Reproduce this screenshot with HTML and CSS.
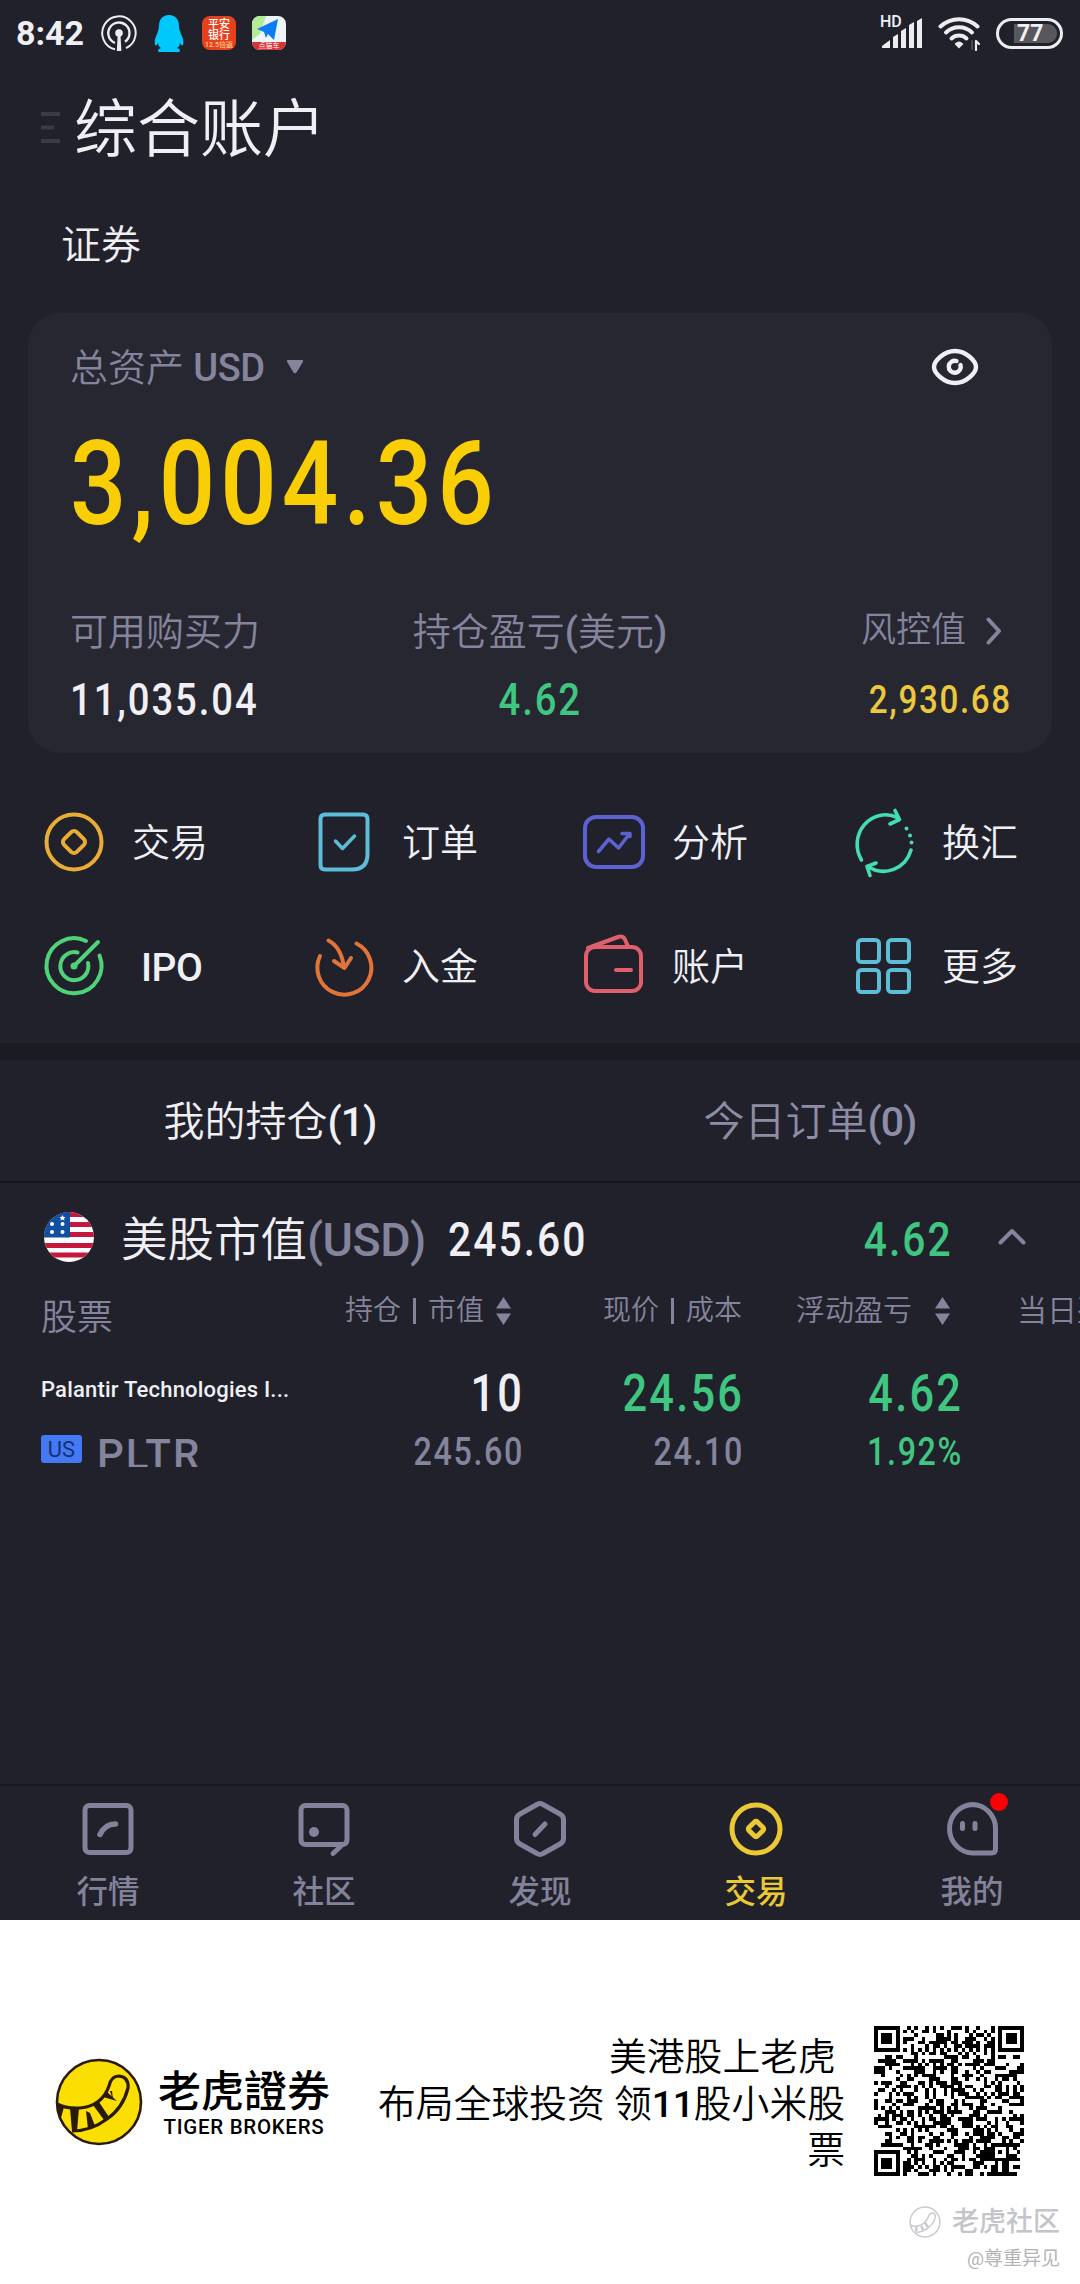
FILE: index.html
```
<!DOCTYPE html>
<html lang="zh-CN">
<head>
<meta charset="utf-8">
<title>综合账户</title>
<link rel="stylesheet" href="styles.css">
</head>
<body>
<div class="app">

  <div class="status">
    <span class="clock">8:42</span>
    <svg class="st-pod" width="36" height="38" viewBox="0 0 36 38" fill="none" stroke="#ededf0">
      <path d="M14 35.3A16.7 16.7 0 1 1 25 34.2" stroke-width="2"/>
      <path d="M14 29A10.6 10.6 0 1 1 24 27.8" stroke-width="2.4"/>
      <circle cx="18" cy="19" r="3.8" fill="#ededf0" stroke="none"/>
      <path d="M16.8 19h2.6l1 18h-4.6z" fill="#ededf0" stroke="none"/>
    </svg>
    <svg class="st-qq" width="30" height="38" viewBox="0 0 30 38" fill="#00c8fb">
      <path d="M15 1C8 1 5 6 5 12c0 3-1 5-2 8-2 4-3 8-2 11 1 1 2 0 3-2 0 2 1 4 3 5-3 1-4 3-2 4h20c2-1 1-3-2-4 2-1 3-3 3-5 1 2 2 3 3 2 1-3 0-7-2-11-1-3-2-5-2-8C25 6 22 1 15 1z"/>
    </svg>
    <div class="st-bank">平安<br>银行<small>12.5倍返</small></div>
    <div class="st-map">
      <svg width="34" height="34" viewBox="0 0 34 34">
        <path d="M0 0h34v34H0z" fill="#eef5f8"/>
        <path d="M0 0h14L8 18 0 24z" fill="#b4ec96"/>
        <path d="M5 13L26 3l-4 21-6-6-2 4-2-6z" fill="#0d7cf2"/>
        <path d="M0 26h34v8H0z" fill="#d83232"/>
      </svg>
      <small>点猫车</small>
    </div>
    <span class="grow"></span>
    <div class="st-signal">
      <svg width="42" height="32" viewBox="0 0 42 32" fill="#ededf0">
        <path d="M1 31v-2l8-6v8z"/><path d="M12 31V20l5-3v14z"/><path d="M20 31V14l5-3v20z"/><path d="M28 31V8l5-3v26z"/><path d="M36 31V4l5-3v30z"/>
      </svg>
      <b>HD</b>
    </div>
    <svg class="st-wifi" width="43" height="36" viewBox="0 0 43 36" fill="none" stroke="#ededf0" stroke-width="4" stroke-linecap="round">
      <path d="M2.500 11.500a27 27 0 0 1 37 0"/>
      <path d="M8 17.500a19 19 0 0 1 26 0"/>
      <path d="M13.500 23.500a11 11 0 0 1 15 0"/>
      <path d="M18 29q3-3 6 0l-3 3z" stroke-width="2" fill="#ededf0"/>
      <path d="M38 26v9M38 26l3 3" stroke-width="2.200"/>
      <path d="M34 26v8" stroke="#4a4a55" stroke-width="2"/>
    </svg>
    <div class="battery"><span>77</span></div>
  </div>

  <div class="title">
    <svg width="20" height="34" viewBox="0 0 20 34" fill="#3b3b47"><path d="M0 1h19v4H0zM0 14.500h13v4H0zM0 28h19v4H0z"/></svg>
    <h1>综合账户</h1>
  </div>
  <div class="subtitle">证券</div>

  <div class="card">
    <div class="card-head">
      <span class="ch-label">总资产 <i>USD</i></span>
      <svg class="caret" width="16" height="14" viewBox="0 0 16 14" fill="#84849c"><path d="M1 0h14q2 0 .5 2.500L9.500 12.500q-1.500 1.500-3 0L.5 2.500Q-1 0 1 0z"/></svg>
      <span class="grow"></span>
      <svg class="eye" width="48" height="38" viewBox="0 0 48 38" fill="none" stroke="#f0f0f4" stroke-width="4.400" stroke-linecap="round">
        <path d="M24 3C35 3 45 13 45 19s-10 16-21 16S3 25 3 19 13 3 24 3z"/>
        <path d="M25.500 13a6 6 0 1 0 4 4"/>
      </svg>
    </div>
    <div class="total num">3,004.36</div>
    <div class="metrics">
      <div class="metric">
        <div class="m-label">可用购买力</div>
        <div class="m-value num">11,035.04</div>
      </div>
      <div class="metric mid">
        <div class="m-label">持仓盈亏<i>(</i>美元<i>)</i></div>
        <div class="m-value num up">4.62</div>
      </div>
      <div class="metric end">
        <div class="m-label small">风控值
          <svg width="16" height="28" viewBox="0 0 16 28" fill="none" stroke="#84849c" stroke-width="4" stroke-linecap="round" stroke-linejoin="round"><path d="M2.500 2.500L13 14 2.500 25.500"/></svg>
        </div>
        <div class="m-value small num gold">2,930.68</div>
      </div>
    </div>
  </div>

  <div class="quick">
    <div class="q-item">
      <svg width="68" height="68" viewBox="0 0 68 68" fill="none" stroke="#e9ad36" stroke-width="4" stroke-linejoin="round">
        <circle cx="34" cy="34" r="27.500"/>
        <rect x="25" y="25" width="18" height="18" rx="4" transform="rotate(45 34 34)"/>
      </svg>
      <span>交易</span>
    </div>
    <div class="q-item">
      <svg width="68" height="68" viewBox="0 0 68 68" fill="none" stroke="#5dbcd6" stroke-width="4" stroke-linecap="round" stroke-linejoin="round">
        <path d="M15 6.500h38q4.500 0 4.500 4.500v35q0 15.500-15.500 15.500H15q-4.500 0-4.500-4.500V11q0-4.500 4.500-4.500z"/>
        <path d="M25.500 33l7 7.500L44.500 28" stroke-width="3.500"/>
      </svg>
      <span>订单</span>
    </div>
    <div class="q-item">
      <svg width="68" height="68" viewBox="0 0 68 68" fill="none" stroke="#5c62d2" stroke-width="4" stroke-linecap="round" stroke-linejoin="round">
        <rect x="5" y="9" width="58" height="50" rx="11"/>
        <path d="M18.500 43.500L29 31l9.500 9L49 26.500M42 25.500h8v3" stroke-width="3.500"/>
      </svg>
      <span>分析</span>
    </div>
    <div class="q-item">
      <svg width="68" height="72" viewBox="0 0 68 72" fill="none" stroke="#45dcb0" stroke-width="3.600" stroke-linecap="round" stroke-linejoin="round">
        <path d="M11.500 54A28.500 29.500 0 0 1 47.500 11.500"/>
        <path d="M45 4.500l4.500 9-9.500 4.500"/>
        <path d="M61 44A28.500 29 0 0 1 18 60.500"/>
        <path d="M26 57l-9 3.500 3 9"/>
        <path d="M56.500 22.500v.1M60 29.500v.1M61.500 36.500v.1" stroke-width="4"/>
      </svg>
      <span>换汇</span>
    </div>
    <div class="q-item">
      <svg width="68" height="68" viewBox="0 0 68 68" fill="none" stroke="#50d278" stroke-width="4" stroke-linecap="round">
        <path d="M46 9a27.500 27.500 0 1 0 13.500 14.500"/>
        <path d="M37.500 20.500a14 14 0 1 0 10.500 10.500"/>
        <path d="M34 34L58 10"/>
        <circle cx="34" cy="34" r="2.500" fill="#50d278" stroke-width="2"/>
      </svg>
      <span class="ipo">IPO</span>
    </div>
    <div class="q-item">
      <svg width="68" height="68" viewBox="0 0 68 68" fill="none" stroke="#e2743a" stroke-width="4" stroke-linecap="round" stroke-linejoin="round">
        <path d="M46.500 11.500A27 27 0 1 1 10 24"/>
        <path d="M18.500 8.500Q31 15 34 35"/>
        <path d="M24 29l10.500 7L41 26"/>
      </svg>
      <span>入金</span>
    </div>
    <div class="q-item">
      <svg width="68" height="68" viewBox="0 0 68 68" fill="none" stroke="#e05f6c" stroke-width="4" stroke-linecap="round" stroke-linejoin="round">
        <rect x="6" y="15" width="55" height="44" rx="9"/>
        <path d="M8 16L38 5q5-1.500 7 2.500l3 7M36 38h15"/>
      </svg>
      <span>账户</span>
    </div>
    <div class="q-item">
      <svg width="68" height="68" viewBox="0 0 68 68" fill="none" stroke="#5dbcd6" stroke-width="4">
        <rect x="8" y="8" width="21" height="22" rx="3.500"/>
        <rect x="38" y="8" width="21" height="22" rx="3.500"/>
        <rect x="8" y="38" width="21" height="22" rx="3.500"/>
        <rect x="38" y="38" width="21" height="22" rx="3.500"/>
      </svg>
      <span>更多</span>
    </div>
  </div>

  <div class="tabs">
    <div class="tab active">我的持仓<i>(1)</i></div>
    <div class="tab">今日订单<i>(0)</i></div>
  </div>

  <div class="market">
    <svg class="flag" width="50" height="50" viewBox="0 0 50 50">
      <clipPath id="round"><circle cx="25" cy="25" r="25"/></clipPath>
      <g clip-path="url(#round)">
        <path d="M0 0h50v50H0z" fill="#fff"/>
        <path d="M0 0h50v5H0zM0 10h50v5H0zM0 20h50v5H0zM0 31h50v5H0zM0 40.500h50v5H0z" fill="#c4183c"/>
        <path d="M0 0h26v25.500H0z" fill="#1150a0"/>
        <path d="M18.500 3l1 2h2l-1.500 1.500.5 2-2-1-2 1 .5-2L15.500 5h2z" fill="#fff"/>
        <g fill="#fff"><circle cx="8" cy="12" r="2"/><circle cx="18.500" cy="12" r="2"/><circle cx="8" cy="20" r="2"/><circle cx="18.500" cy="20" r="2"/></g>
      </g>
    </svg>
    <span class="mk-name">美股市值<i>(USD)</i></span>
    <span class="mk-value num">245.60</span>
    <span class="grow"></span>
    <span class="mk-value num right up">4.62</span>
    <svg class="fold" width="28" height="18" viewBox="0 0 28 18" fill="none" stroke="#84849c" stroke-width="4" stroke-linecap="round" stroke-linejoin="round"><path d="M2.500 14.500L14 3l11.500 11.500"/></svg>
  </div>

  <div class="row head">
    <div class="c-stock">股票</div>
    <div class="c-num sort">持仓<b></b>市值
      <svg width="15" height="28" viewBox="0 0 15 28" fill="#84849c"><path d="M7.500 0L15 11.500H0zM7.500 28L0 16.500h15z"/></svg>
    </div>
    <div class="c-num">现价<b></b>成本</div>
    <div class="c-num sort wide">浮动盈亏
      <svg width="15" height="28" viewBox="0 0 15 28" fill="#84849c"><path d="M7.500 0L15 11.500H0zM7.500 28L0 16.500h15z"/></svg>
    </div>
    <div class="c-next">当日盈亏</div>
  </div>

  <div class="row main">
    <div class="c-full">Palantir Technologies I...</div>
    <div class="c-num num">10</div>
    <div class="c-num num up">24.56</div>
    <div class="c-num num up">4.62</div>
  </div>
  <div class="row sub">
    <div class="c-code"><span class="badge">US</span><span class="ticker">PLTR</span></div>
    <div class="c-num num">245.60</div>
    <div class="c-num num">24.10</div>
    <div class="c-num num up">1.92%</div>
  </div>

  <span class="grow"></span>

  <div class="navbar">
    <div class="nav">
      <svg width="56" height="58" viewBox="0 0 56 58" fill="none" stroke="#82829a" stroke-width="5" stroke-linecap="round">
        <rect x="5" y="5.500" width="46" height="47" rx="4.500"/>
        <path d="M20 34.500Q25 24 35.500 24" stroke-width="5.500"/>
      </svg>
      <span>行情</span>
    </div>
    <div class="nav">
      <svg width="56" height="58" viewBox="0 0 56 58" fill="none" stroke="#82829a" stroke-width="5" stroke-linecap="round">
        <rect x="5" y="5.500" width="46" height="39" rx="4.500"/>
        <circle cx="18" cy="32" r="5" fill="#82829a" stroke="none"/>
        <path d="M45 46l-8 7.500"/>
      </svg>
      <span>社区</span>
    </div>
    <div class="nav">
      <svg width="56" height="58" viewBox="0 0 56 58" fill="none" stroke="#82829a" stroke-width="5" stroke-linecap="round" stroke-linejoin="round">
        <path d="M25 4.500q3-2 6 0L48 14q3.500 2 3.500 5.500v19q0 3.500-3.500 5.500l-17 9.500q-3 2-6 0L8 44q-3.500-2-3.500-5.500v-19Q4.500 16 8 14z"/>
        <path d="M23 34.500L33 24"/>
      </svg>
      <span>发现</span>
    </div>
    <div class="nav active">
      <svg width="56" height="58" viewBox="0 0 56 58" fill="none" stroke="#eac935" stroke-width="5" stroke-linejoin="round">
        <circle cx="28" cy="29" r="24"/>
        <rect x="22" y="23" width="12" height="12" rx="2" transform="rotate(45 28 29)"/>
      </svg>
      <span>交易</span>
    </div>
    <div class="nav">
      <svg width="56" height="58" viewBox="0 0 56 58" fill="none" stroke="#82829a" stroke-width="5" stroke-linecap="round">
        <path d="M28 4.500A23.500 24 0 0 1 51.500 29v20q0 4-4 4H28A24 24.300 0 0 1 28 4.500z"/>
        <path d="M18.500 23.500v5M31 23.500v5"/>
      </svg>
      <span>我的</span>
      <em class="dot"></em>
    </div>
  </div>

  <div class="promo">
    <svg class="logo" width="88" height="88" viewBox="0 0 88 88">
      <circle cx="44" cy="44" r="42" fill="#fcdf02" stroke="#2a1a08" stroke-width="2.600"/>
      <path d="M2 46Q12 51 25 50Q47 48 54 28Q56 18 64 18Q74 19 73 30Q68 50 52 61Q36 73 17 73" fill="none" stroke="#2a1a08" stroke-width="3.200"/>
      <g fill="#2a1a08">
        <path d="M2 46l7 3-3 11q-4-6-4-14z"/>
        <path d="M15 50h9l-2 23-5 0z"/>
        <path d="M31 53l4 2 5 13-7 3z"/>
        <path d="M38 47l6-3 10 15-5 3z"/>
        <path d="M48 39l4-5 10 9z"/>
        <path d="M55 33l2 0 1 9z"/>
      </g>
    </svg>
    <div class="brand">
      <strong>老虎證券</strong>
      <span>TIGER BROKERS</span>
    </div>
    <div class="slogan"><span>美港股上老虎&nbsp;</span><br>布局全球投资 领<i>11</i>股小米股<br>票</div>
    <svg class="qr" id="qr" width="150" height="150" viewBox="0 0 41 41" shape-rendering="crispEdges"></svg>
  </div>

  <div class="mark">
    <div class="mark-name">
      <svg width="32" height="32" viewBox="0 0 88 88" fill="none" stroke="#c9c9cf" stroke-width="4">
        <circle cx="44" cy="44" r="41"/>
        <path d="M4 52q8 6 20 3Q46 50 54 28q3-9 11-9 9 1 7 13-5 18-20 29-16 11-32 12"/>
        <path d="M20 56v14M34 54l4 12M44 46l8 12" stroke-width="7"/>
      </svg>
      <span>老虎社区</span>
    </div>
    <div class="mark-user">@尊重异见</div>
  </div>

</div>
<script src="qr.js"></script>
</body>
</html>
```
FILE: styles.css
```
*
{
  box-sizing:border-box;
}

body
{
  margin:0;
  background:#21212b;
  color:#efeff4;
  font-family:Roboto, "Noto Sans CJK SC", sans-serif;
  font-weight:350;
}

i, em
{
  font-style:normal;
  font-weight:500;
}

svg
{
  display:block;
  flex:none;
}

.app
{
  width:1080px;
  height:2284px;
  display:flex;
  flex-direction:column;
  overflow:hidden;
}

.app > div
{
  flex:none;
}

.app .grow
{
  flex:1;
}

/* narrow figures, set a little apart */
.num
{
  font-weight:500;
  letter-spacing:0.05em;
  transform:scaleX(0.85);
  transform-origin:left center;
}

.up
{
  color:#3fc680;
}

.gold
{
  color:#ebc83c;
}

/* status bar */
.status
{
  height:66px;
  display:flex;
  align-items:center;
  padding:0 17px 0 16px;
}

.clock
{
  width:85px;
  font-size:34px;
  font-weight:700;
}

.st-qq
{
  margin-left:17px;
}

.st-bank, .st-map
{
  position:relative;
  width:34px;
  height:34px;
  margin-left:18px;
  border-radius:8px;
  overflow:hidden;
}

.st-bank
{
  background:#e8401c;
  color:#fff;
  font-size:11px;
  font-weight:500;
  line-height:11px;
  text-align:center;
  padding-top:3px;
}

.st-bank small
{
  display:block;
  font-size:7px;
  line-height:8px;
  color:#ffd08a;
}

.st-map
{
  margin-left:16px;
}

.st-map small
{
  position:absolute;
  left:0;
  right:0;
  bottom:0;
  font-size:7px;
  line-height:8px;
  text-align:center;
  color:#fff;
}

.st-signal
{
  position:relative;
  margin-right:15px;
}

.st-signal b
{
  position:absolute;
  left:-1px;
  top:-3px;
  font-size:16px;
  line-height:16px;
  font-weight:500;
}

.st-wifi
{
  margin-right:15px;
}

.battery
{
  width:67px;
  height:31px;
  border:3px solid #ededf0;
  border-radius:16px;
  padding:3px;
}

.battery span
{
  display:block;
  margin-left:12px;
  height:19px;
  padding-left:3px;
  border-radius:0 9px 9px 0;
  background:#57575c;
  font-size:23px;
  font-weight:700;
  line-height:19px;
}

/* page title */
.title
{
  height:124px;
  display:flex;
  align-items:center;
  padding-left:41px;
}

.title h1
{
  margin:3px 0 0 13px;
  font-size:63px;
  line-height:80px;
  font-weight:350;
}

.subtitle
{
  height:107px;
  padding:2px 0 0 61px;
  font-size:40px;
  line-height:107px;
}

/* assets card */
.card
{
  height:440px;
  margin:16px 28px 0;
  padding:0 42px 0 42px;
  border-radius:32px;
  background:#272732;
}

.card-head
{
  height:108px;
  display:flex;
  align-items:center;
  padding-right:31px;
  font-size:38px;
  color:#84849c;
}

.ch-label
{
  margin-bottom:6px;
}

.card-head i
{
  letter-spacing:-0.5px;
}

.caret
{
  margin-left:23px;
}

.total
{
  height:123px;
  padding-top:2px;
  font-size:117px;
  line-height:123px;
  color:#f9ce04;
}

.metrics
{
  display:grid;
  grid-template-columns:1fr auto 1fr;
  margin-top:61px;
}

.m-label
{
  height:50px;
  padding-top:2px;
  font-size:38px;
  line-height:50px;
  color:#84849c;
}

.m-value
{
  height:50px;
  margin-top:20px;
  font-size:45px;
  line-height:50px;
}

.mid
{
  text-align:center;
}

.mid .num
{
  transform-origin:center;
}

.end
{
  text-align:right;
}

.end .num
{
  margin-right:-2px;
  transform-origin:right center;
}

.m-label.small
{
  display:flex;
  justify-content:flex-end;
  align-items:center;
  gap:20px;
  padding-right:8px;
  font-size:35px;
}

.m-value.small
{
  font-size:39px;
}

/* shortcuts */
.quick
{
  height:290px;
  padding-top:27px;
  display:grid;
  grid-template-columns:repeat(4, 270px);
  grid-auto-rows:124px;
}

.q-item
{
  display:flex;
  align-items:center;
  padding-left:40px;
}

.q-item span
{
  margin:0 0 5px 24px;
  font-size:38px;
}

.q-item .ipo
{
  margin:3px 0 0 33px;
  font-size:39px;
  font-weight:500;
  letter-spacing:-0.5px;
}

/* tabs */
.tabs
{
  height:140px;
  display:flex;
  border-top:17px solid #1b1b24;
  border-bottom:2px solid #15151d;
}

.tab
{
  flex:1;
  padding-top:2px;
  text-align:center;
  font-size:41px;
  line-height:121px;
  color:#8d8da6;
}

.tab i
{
  letter-spacing:-1px;
}

.tab.active
{
  color:#efeff4;
}

/* positions */
.market
{
  height:108px;
  display:flex;
  align-items:center;
  padding:0 54px 0 44px;
}

.mk-name
{
  margin:0 0 3px 27px;
  font-size:46.500px;
}

.mk-name i
{
  color:#84849c;
  letter-spacing:-0.5px;
}

.mk-value
{
  margin:4px 0 0 22px;
  font-size:48px;
}

.mk-value.right
{
  transform-origin:right center;
}

.fold
{
  margin-left:45px;
}

.row
{
  display:grid;
  grid-template-columns:262px 219px 220px 219px 119px;
  align-items:center;
  padding-left:41px;
}

.row .num
{
  margin-right:-2px;
  transform-origin:right center;
}

.head
{
  height:38px;
  font-size:28px;
  line-height:38px;
  color:#84849c;
  margin-top:-6px;
}

.c-stock
{
  padding-top:14px;
  font-size:36px;
}

.c-num
{
  text-align:right;
}

.head .c-num
{
  display:flex;
  justify-content:flex-end;
  align-items:center;
}

.head .c-num b
{
  width:3px;
  height:26px;
  margin:0 12px;
  background:#84849c;
}

.sort
{
  padding-right:11px;
}

.sort svg
{
  margin-left:12px;
}

.sort.wide
{
  font-size:29px;
}

.sort.wide svg
{
  margin-left:23px;
}

.c-next
{
  padding-left:56px;
  font-size:30px;
  white-space:nowrap;
  overflow:hidden;
}

.main
{
  height:60px;
  margin-top:41px;
  font-size:51px;
  line-height:60px;
}

.c-full
{
  margin-top:-9px;
  font-size:22px;
  font-weight:500;
  letter-spacing:0.2px;
  white-space:nowrap;
}

.sub
{
  height:56px;
  font-size:38px;
  line-height:56px;
  color:#84849c;
}

.c-code
{
  display:flex;
  align-items:center;
}

.badge
{
  width:41px;
  height:28px;
  margin-bottom:6px;
  border-radius:3px;
  background:#4479f5;
  color:#18306e;
  font-size:22px;
  font-weight:400;
  line-height:29px;
  text-align:center;
}

/* the box cuts off the foot of the letters */
.ticker
{
  height:34px;
  margin:-4px 0 0 15px;
  overflow:hidden;
  font-size:42px;
  line-height:44px;
  font-weight:500;
  letter-spacing:2px;
}

/* bottom navigation */
.navbar
{
  height:136px;
  display:flex;
  border-top:2px solid #181820;
}

.nav
{
  position:relative;
  flex:1;
  display:flex;
  flex-direction:column;
  align-items:center;
  padding-top:14px;
  color:#82829a;
}

.nav span
{
  margin-top:13px;
  font-size:31.500px;
  line-height:44px;
  font-weight:500;
}

.nav.active
{
  color:#eac935;
}

.dot
{
  position:absolute;
  left:126px;
  top:7px;
  width:18px;
  height:18px;
  border-radius:50%;
  background:#fb0006;
}

/* promo strip */
.promo
{
  height:288px;
  display:flex;
  align-items:flex-start;
  background:#fff;
  color:#000;
  padding:106px 56px 0 55px;
}

.logo
{
  margin-top:32px;
}

.brand
{
  width:172px;
  margin:36px 0 0 15px;
  text-align:center;
}

.brand strong
{
  display:block;
  font-family:"Noto Sans CJK TC", sans-serif;
  font-size:43px;
  line-height:52px;
  font-weight:500;
  white-space:nowrap;
}

.brand span
{
  display:block;
  margin-top:1px;
  font-size:20.500px;
  line-height:24px;
  font-weight:500;
  letter-spacing:0.7px;
  white-space:nowrap;
}

.slogan
{
  flex:1;
  margin-top:8px;
  font-size:37.800px;
  line-height:46.500px;
  text-align:right;
  white-space:nowrap;
}

.slogan i
{
  letter-spacing:-0.5px;
}

.qr
{
  margin-left:29px;
}

.mark
{
  height:76px;
  padding-right:20px;
  background:#fff;
  color:#c4c4ca;
  text-align:right;
}

.mark-name
{
  display:flex;
  justify-content:flex-end;
  align-items:center;
  gap:11px;
  height:28px;
  font-size:27px;
  line-height:28px;
  font-weight:500;
}

.mark-user
{
  margin-top:9px;
  font-size:19px;
  line-height:28px;
  font-weight:400;
  color:#b4b4b8;
}
```
FILE: qr.js
```
var N = 41 ;
var seed = 20201 ;

function next()
{
  seed = ( seed * 1103515245 + 12345 ) % 2147483648 ;
  return seed / 2147483648 ;
}

// square marker: black ring, white ring, black core
function marker( x, y, cx, cy, r )
{
  var d = Math.max( Math.abs( x - cx ), Math.abs( y - cy ) ) ;
  if ( d > r + 1 ) return -1 ;
  if ( r == 3 ) return ( d == 3 || d < 2 ) ? 1 : 0 ;
  return d > r ? -1 : ( d == 1 ? 0 : 1 ) ;
}

var path = "" ;
for ( var y = 0 ; y < N ; y++ )
{
  for ( var x = 0 ; x < N ; x++ )
  {
    var on = next() < 0.5 ? 1 : 0 ;
    if ( y == 6 ) on = x % 2 ? 0 : 1 ;
    if ( x == 6 ) on = y % 2 ? 0 : 1 ;
    var marks = [ marker( x, y, 3, 3, 3 ), marker( x, y, 37, 3, 3 ), marker( x, y, 3, 37, 3 ), marker( x, y, 34, 34, 2 ) ] ;
    for ( var i = 0 ; i < marks.length ; i++ )
      if ( marks[i] >= 0 ) on = marks[i] ;
    if ( on ) path += "M" + x + " " + y + "h1v1h-1z" ;
  }
}
document.getElementById( "qr" ).innerHTML = '<path d="' + path + '"/>' ;
```
